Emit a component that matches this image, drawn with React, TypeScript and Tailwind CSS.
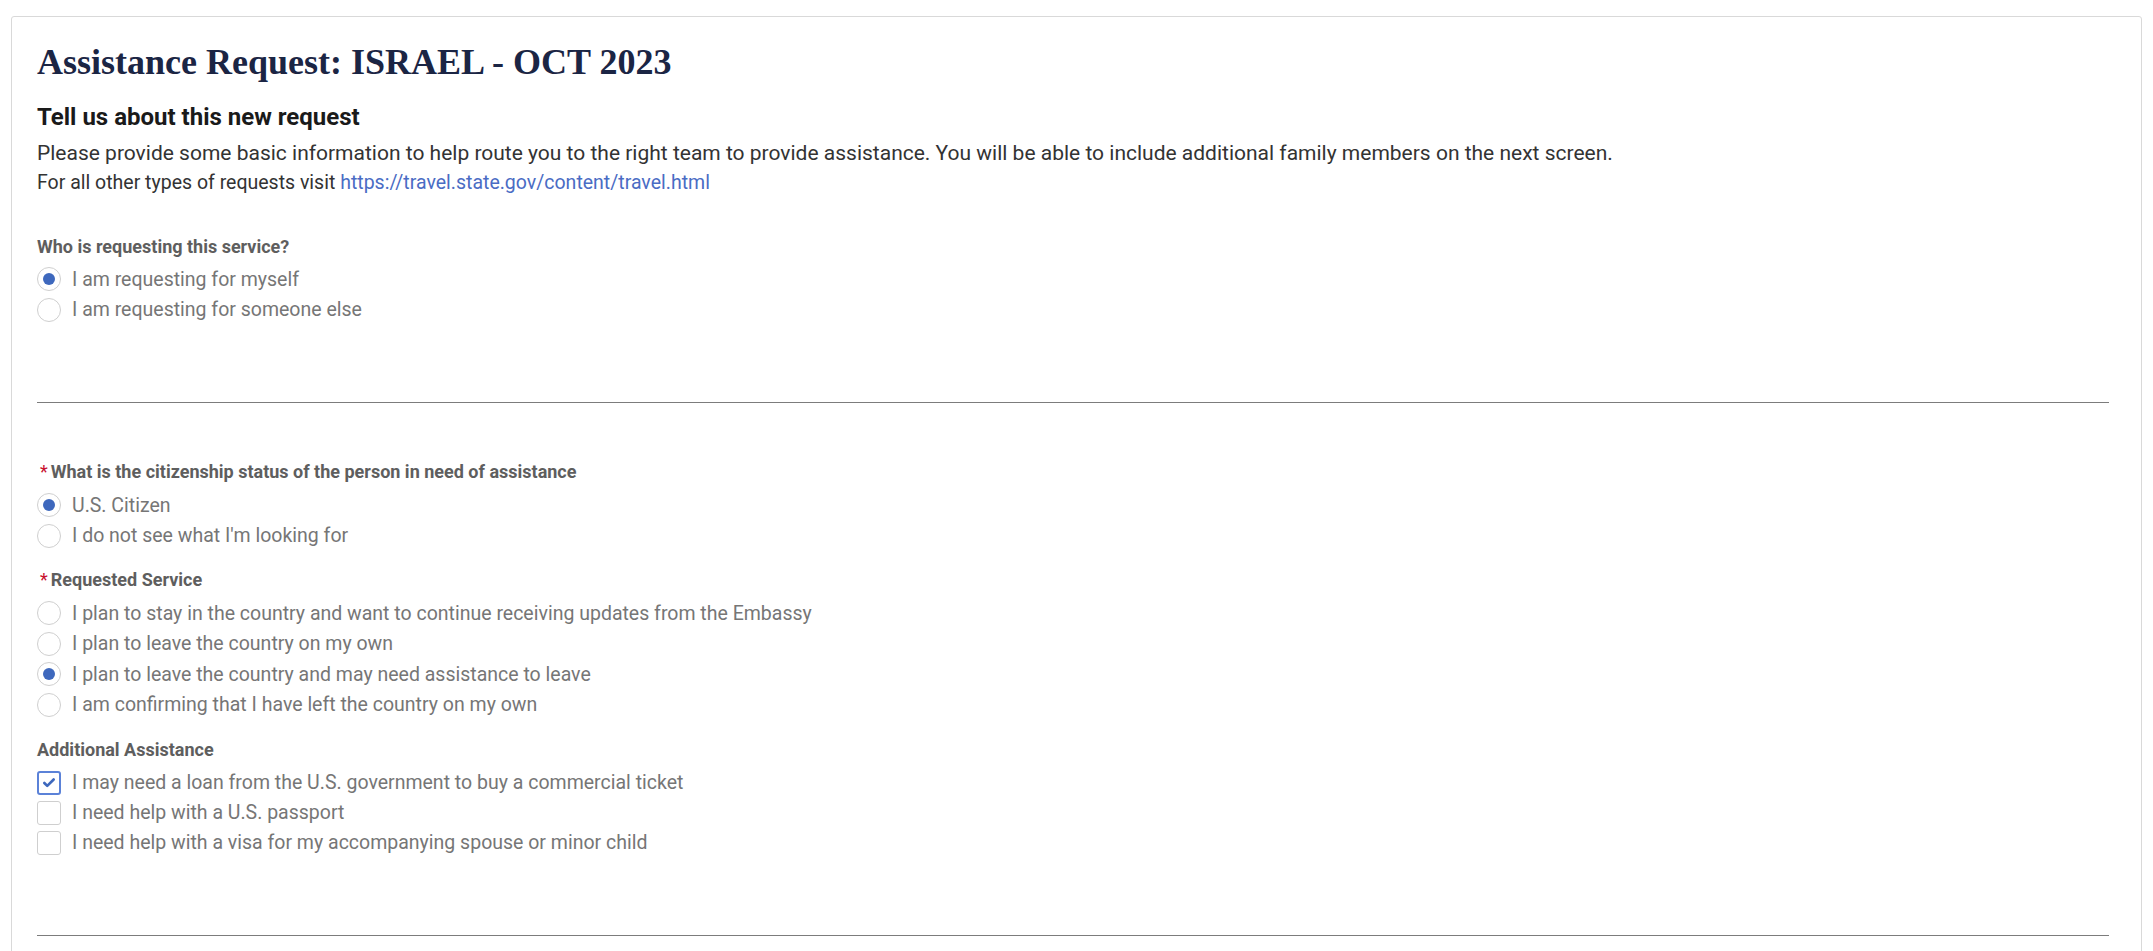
import { Check } from "lucide-react";

const Radio = ({ checked, label }: { checked?: boolean; label: string }) => (
  <div className="h-[30.5px] flex items-center gap-[11px]">
    <span className="w-6 h-6 rounded-full border border-[#cfcfcf] grid place-items-center shrink-0 bg-white">
      {checked ? <span className="w-3 h-3 rounded-full bg-[#3e68bd]" /> : null}
    </span>
    <span className="text-[19.5px] text-[#767676]">{label}</span>
  </div>
);

const Checkbox = ({ checked, label }: { checked?: boolean; label: string }) => (
  <div className="h-[30px] flex items-center gap-[11px]">
    <span
      className={
        checked
          ? "w-6 h-6 rounded-[3px] border-2 border-[#5b82d8] grid place-items-center shrink-0"
          : "w-6 h-6 rounded-[3px] border border-[#cfcfcf] shrink-0"
      }
    >
      {checked ? <Check className="w-3.5 h-3.5 text-[#3e68bd]" strokeWidth={4.5} /> : null}
    </span>
    <span className="text-[19.5px] text-[#767676]">{label}</span>
  </div>
);

const Label = ({ text, required }: { text: string; required?: boolean }) => (
  <div className="h-6 flex items-center text-[18px] font-bold text-[#5e5e5e]">
    {required ? <span className="text-[#c8102e] ml-[3px] mr-[3px] font-normal">*</span> : null}
    {text}
  </div>
);

export default function App() {
  return (
    <div className="min-h-screen bg-white pt-4 px-[11px]" style={{ fontFamily: "Roboto, Arial, sans-serif" }}>
      <div className="border border-[#d9d9d9] rounded-[3px] pl-[25px] pr-[32px] pt-[25px] pb-10">
        <h1
          className="text-[36px] leading-[40px] font-bold text-[#1b2544]"
          style={{ fontFamily: '"Liberation Serif", "Times New Roman", serif' }}
        >
          Assistance Request: ISRAEL - OCT 2023
        </h1>

        <h2 className="mt-[21px] text-[24px] leading-[28px] font-bold text-[#1a1a1a]">
          Tell us about this new request
        </h2>
        <div className="mt-[8px] leading-[29px] text-[#333333]">
          <p className="text-[21px]">
            Please provide some basic information to help route you to the right team to provide assistance. You will
            be able to include additional family members on the next screen.
          </p>
          <p className="text-[19.5px]">
            For all other types of requests visit{" "}
            <a href="#" className="text-[#4a6cc4]">
              https://travel.state.gov/content/travel.html
            </a>
          </p>
        </div>

        <div className="mt-[37px]">
          <Label text="Who is requesting this service?" />
          <div className="mt-[6px]">
            <Radio checked label="I am requesting for myself" />
            <Radio label="I am requesting for someone else" />
          </div>
        </div>

        <hr className="mt-[77px] border-t border-[#7c7c7c]" />

        <div className="mt-[56px]">
          <Label required text="What is the citizenship status of the person in need of assistance" />
          <div className="mt-[7px]">
            <Radio checked label="U.S. Citizen" />
            <Radio label="I do not see what I'm looking for" />
          </div>
        </div>

        <div className="mt-[16px]">
          <Label required text="Requested Service" />
          <div className="mt-[7px]">
            <Radio label="I plan to stay in the country and want to continue receiving updates from the Embassy" />
            <Radio label="I plan to leave the country on my own" />
            <Radio checked label="I plan to leave the country and may need assistance to leave" />
            <Radio label="I am confirming that I have left the country on my own" />
          </div>
        </div>

        <div className="mt-[17px]">
          <Label text="Additional Assistance" />
          <div className="mt-[7px]">
            <Checkbox checked label="I may need a loan from the U.S. government to buy a commercial ticket" />
            <Checkbox label="I need help with a U.S. passport" />
            <Checkbox label="I need help with a visa for my accompanying spouse or minor child" />
          </div>
        </div>

        <hr className="mt-[77px] border-t border-[#7c7c7c]" />
      </div>
    </div>
  );
}
